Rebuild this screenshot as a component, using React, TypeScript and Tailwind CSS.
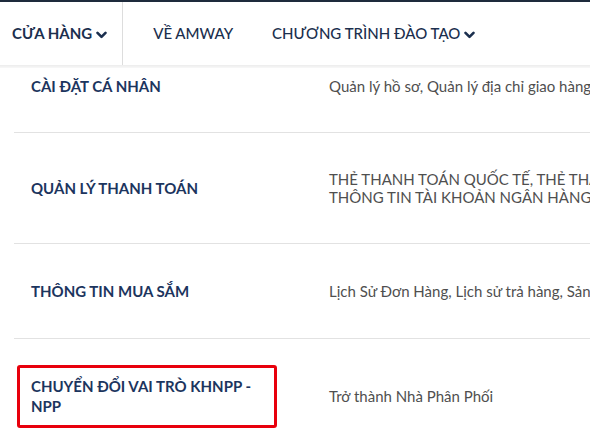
import React from 'react';

const Chevron = () => (
  <svg width="11" height="8" viewBox="0 0 11 8" className="ml-[4px] mt-[2px]">
    <path d="M1.5 1.8 L5.5 5.8 L9.5 1.8" fill="none" stroke="currentColor" strokeWidth="2.6" strokeLinecap="round" strokeLinejoin="round" />
  </svg>
);

const rows = [
  { title: 'CÀI ĐẶT CÁ NHÂN', desc: ['Quản lý hồ sơ, Quản lý địa chỉ giao hàng, Đổi mật khẩu'], first: true },
  {
    title: 'QUẢN LÝ THANH TOÁN',
    desc: ['THẺ THANH TOÁN QUỐC TẾ, THẺ THANH TOÁN NỘI ĐỊA,', 'THÔNG TIN TÀI KHOẢN NGÂN HÀNG'],
  },
  { title: 'THÔNG TIN MUA SẮM', desc: ['Lịch Sử Đơn Hàng, Lịch sử trả hàng, Sản phẩm yêu thích'] },
  { title: 'CHUYỂN ĐỔI VAI TRÒ KHNPP - NPP', desc: ['Trở thành Nhà Phân Phối'], marked: true },
];

export default function App() {
  return (
    <div
      className="w-[590px] h-[442px] overflow-hidden bg-white"
      style={{ fontFamily: '"Lato", "Noto Sans", sans-serif' }}
    >
      {/* top navigation */}
      <div className="border-t-2 border-[#1e2b3c] bg-white">
        <div className="flex h-[63px] items-center text-[15px] text-[#1b2f4e]">
          <div className="flex h-full items-center pl-[12px] pr-[15px] border-r border-[#dddddd] font-bold">
            CỬA HÀNG
            <Chevron />
          </div>
          <div className="pl-[30px] font-medium">VỀ AMWAY</div>
          <div className="flex items-center pl-[39px] font-medium">
            CHƯƠNG TRÌNH ĐÀO TẠO
            <Chevron />
          </div>
        </div>
      </div>
      <div className="h-[3px] bg-gradient-to-b from-[#ececec] to-[#f8f8f8]" />

      {/* account sections */}
      <div className="ml-[14px]">
        {rows.map((r) => (
          <div
            key={r.title}
            className={`flex items-center border-b border-[#e2e2e2] ${r.first ? 'pt-[8px] pb-[36px]' : 'py-[37px]'}`}
          >
            <div className="relative w-[315px] shrink-0 pl-[17px]">
              <div className="w-[240px] text-[15px] font-bold leading-[20px] text-[#1c355e]">{r.title}</div>
              {r.marked && (
                <div className="absolute left-[3px] top-[-11px] h-[63px] w-[260px] rounded-[3px] border-[3px] border-[#e8000c]" />
              )}
            </div>
            <div className="whitespace-nowrap text-[15px] leading-[18px] text-[#4f4f4f]">
              {r.desc.map((d) => (
                <div key={d}>{d}</div>
              ))}
            </div>
          </div>
        ))}
      </div>
    </div>
  );
}
